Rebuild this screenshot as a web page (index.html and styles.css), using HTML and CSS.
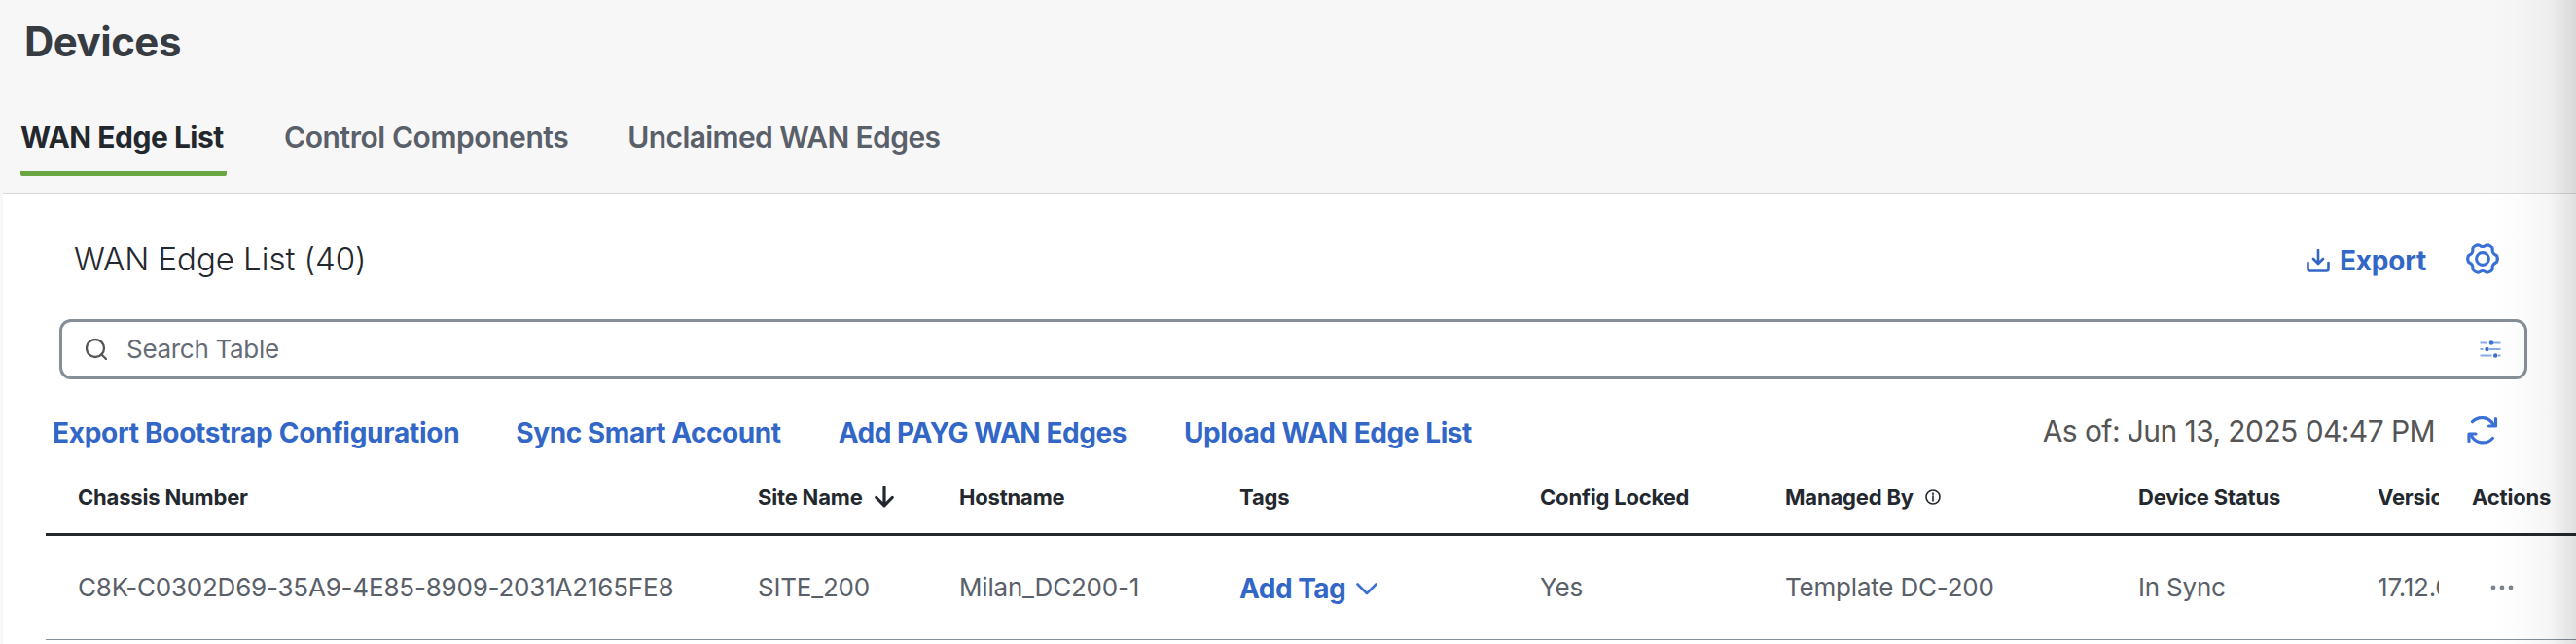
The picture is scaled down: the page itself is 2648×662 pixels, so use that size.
FILE: index.html
```html
<!DOCTYPE html>
<html lang="en">
<head>
<meta charset="utf-8">
<title>Devices</title>
<link rel="stylesheet" href="styles.css">
</head>
<body>
<div class="page">
  <header class="top">
    <h1 class="heading">Devices</h1>
    <nav class="tabs">
      <a class="tab active">WAN Edge List</a>
      <a class="tab">Control Components</a>
      <a class="tab">Unclaimed WAN Edges</a>
    </nav>
  </header>
  <main class="panel">
    <div class="title-row">
      <h2 class="title">WAN Edge List (40)</h2>
      <a class="export">
        <svg class="i-export" viewBox="0 0 24 24"><path d="M1.500 14V20.500Q1.500 22.500 3.500 22.500H20.500Q22.500 22.500 22.500 20.500V14M12 1V14.500M7 10L12 15L17 10"/></svg>
        <span>Export</span>
      </a>
      <svg class="i-gear" viewBox="-17 -17 34 34">
        <defs><path id="lobe" d="M15.260 0Q15.260 3.240 13.470 3.980Q11.680 4.720 10.800 6.240Q9.930 7.760 10.190 9.680Q10.440 11.590 7.630 13.220Q4.820 14.840 3.290 13.660Q1.750 12.480 0 12.480"/></defs>
        <use href="#lobe"/><use href="#lobe" transform="scale(-1 1)"/><use href="#lobe" transform="scale(1 -1)"/><use href="#lobe" transform="scale(-1 -1)"/>
        <circle r="6.400"/>
      </svg>
    </div>
    <div class="search">
      <svg class="i-search" viewBox="0 0 22 22"><circle cx="10" cy="10" r="9"/><path d="M16.200 16.200L21 21"/></svg>
      <span class="placeholder">Search Table</span>
      <svg class="i-filter" viewBox="0 0 22 18"><g class="rails"><path d="M.5 2.500H8M14 2.500H21.500M.5 9H3.500M10 9H21.500M.5 15.500H12.500M19 15.500H21.500"/></g><circle cx="12" cy="2.500" r="2.200"/><circle cx="7.500" cy="9" r="2.200"/><circle cx="16.200" cy="15.500" r="2.200"/></svg>
    </div>
    <div class="actions">
      <a class="bootstrap">Export Bootstrap Configuration</a>
      <a>Sync Smart Account</a>
      <a>Add PAYG WAN Edges</a>
      <a>Upload WAN Edge List</a>
      <span class="asof">As of: Jun 13, 2025 04:47 PM</span>
      <svg class="i-refresh" viewBox="0 0 32 30"><path d="M5.500 6.700A13.500 13.500 0 0 1 27 9.500M26.300 23.500A13.500 13.500 0 0 1 4.500 21"/><path d="M29.500 3.500V11H22.500M2 26.500V19H9"/></svg>
    </div>
    <div class="table">
      <div class="row head">
        <span>Chassis Number</span>
        <span>Site Name <svg class="i-sort" viewBox="0 0 20 22"><path d="M10 1V20M1.800 11.500L10 19.800L18.200 11.500"/></svg></span>
        <span>Hostname</span>
        <span>Tags</span>
        <span>Config Locked</span>
        <span>Managed By <svg class="i-info" viewBox="0 0 16 16"><circle cx="8" cy="8" r="7"/><path d="M8 7V12M8 4V5.600"/></svg></span>
        <span>Device Status</span>
        <span class="clip">Version</span>
        <span class="act">Actions</span>
      </div>
      <div class="row data">
        <span>C8K-C0302D69-35A9-4E85-8909-2031A2165FE8</span>
        <span>SITE_200</span>
        <span>Milan_DC200-1</span>
        <a class="addtag">Add Tag <svg class="i-chev" viewBox="0 0 22 13"><path d="M1.500 1.500L11 11L20.500 1.500"/></svg></a>
        <span>Yes</span>
        <span>Template DC-200</span>
        <span>In Sync</span>
        <span class="clip">17.12.04</span>
        <svg class="i-dots" viewBox="0 0 24 6"><circle cx="3" cy="3" r="2.400"/><circle cx="12" cy="3" r="2.400"/><circle cx="21" cy="3" r="2.400"/></svg>
      </div>
    </div>
  </main>
  <div class="edge-shadow"></div>
</div>
</body>
</html>
```
FILE: styles.css
```css
* { box-sizing: border-box; }
body { margin: 0; background: #f7f7f7; font-family: Inter, "Liberation Sans", sans-serif; color: #23282e; }
.page { position: relative; width: 2648px; height: 662px; overflow: hidden; white-space: nowrap; }
svg { display: block; flex: none; fill: none; stroke: #3a70d6; stroke-width: 2.6; stroke-linecap: round; stroke-linejoin: round; }
.top { height: 198px; padding-left: 21px; }
.heading { margin: 0; padding: 17px 0 0 4px; font-size: 42px; line-height: 52px; font-weight: 700; letter-spacing: -.5px; color: #373c42; }
.tabs { display: flex; margin-top: 44px; }
.tab { height: 67px; padding-top: 10px; margin-right: 61px; font-size: 30px; line-height: 36px; font-weight: 600; letter-spacing: -.42px; color: #596069; }
.tab:last-child { letter-spacing: -.6px; }
.tab.active { width: 212px; margin-right: 59px; font-weight: 700; letter-spacing: -.5px; color: #23282e; background: linear-gradient(#6aa642, #6aa642) 0 63px / 212px 5px no-repeat; border-radius: 2px; height: 68px; }
.panel { height: 464px; margin-left: 3px; border-top: 1px solid #d8d8d8; background: #fff; }
.title-row { display: flex; align-items: center; height: 129px; padding: 5px 79px 0 73px; }
.title { margin: 0 auto 0 0; font-size: 33px; line-height: 40px; font-weight: 300; letter-spacing: -.03px; }
.export { display: flex; align-items: center; gap: 10px; margin-right: 41px; padding-top: 4px; font-size: 28px; line-height: 34px; font-weight: 700; letter-spacing: -.2px; color: #3267c7; }
.i-export { width: 24px; height: 24px; stroke: #3267c7; stroke-width: 2.6; }
.i-gear { width: 34px; height: 34px; stroke-width: 3.1; }
.search { display: flex; align-items: center; height: 62px; margin: 0 50px 0 58px; padding: 0 24px; border: 3px solid #868e97; border-radius: 12px; }
.i-search { width: 22px; height: 22px; margin-right: 20px; stroke: #555; stroke-width: 2.3; }
.placeholder { font-size: 26px; line-height: 32px; letter-spacing: -.3px; color: #656c75; }
.i-filter { width: 22px; height: 18px; margin-left: auto; fill: #3a70d6; stroke: none; }
.rails { stroke: #8aabe8; stroke-width: 2; stroke-linecap: butt; }
.actions { display: flex; align-items: center; height: 90px; margin-top: 10px; padding: 0 80px 0 51px; font-size: 28px; line-height: 34px; font-weight: 700; letter-spacing: -.44px; color: #3267c7; }
.actions a { margin-right: 59px; }
.actions .bootstrap { margin-right: 58px; letter-spacing: -.27px; }
.asof { margin: 0 33px 5px auto; font-size: 30px; font-weight: 400; letter-spacing: -.58px; color: #555; }
.i-refresh { width: 32px; height: 30px; margin-bottom: 6px; stroke-width: 3.2; }
.table { margin: -1px 0 0 44px; }
.row { display: grid; grid-template-columns: 699px 207px 288px 309px 252px 363px 246px 63px 1fr; align-items: center; padding-left: 33px; }
.head { height: 62px; padding-bottom: 16px; border-bottom: 3px solid #23282e; font-size: 22px; line-height: 28px; font-weight: 700; letter-spacing: -.18px; }
.head span { display: flex; align-items: center; }
.i-sort { width: 20px; height: 22px; margin-left: 12px; stroke: #23282e; stroke-width: 3.2; }
.i-info { width: 16px; height: 16px; margin-left: 12px; stroke: #23282e; stroke-width: 1.6; }
.clip { overflow: hidden; }
.act { padding-left: 34px; }
.data { height: 107px; border-bottom: 1px solid #868e97; font-size: 26px; line-height: 32px; letter-spacing: -.2px; color: #596069; }
.addtag { display: flex; align-items: center; gap: 11px; padding-top: 2px; font-size: 28px; font-weight: 700; letter-spacing: -.5px; color: #3267c7; }
.i-chev { width: 22px; height: 13px; stroke-width: 2.6; }
.i-dots { width: 24px; height: 6px; margin-left: 53px; fill: #7b838d; stroke: none; }
.edge-shadow { position: absolute; top: 0; right: 0; width: 90px; height: 662px; background: linear-gradient(90deg, rgba(0,0,0,0), rgba(0,0,0,.01) 35%, rgba(0,0,0,.04) 70%, rgba(0,0,0,.12)); }
```
